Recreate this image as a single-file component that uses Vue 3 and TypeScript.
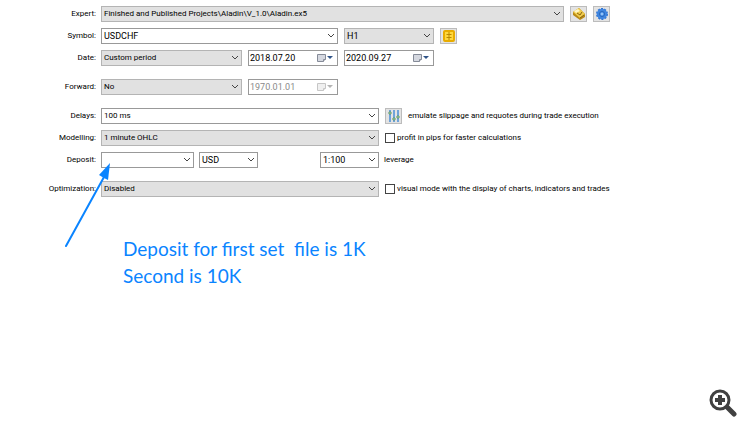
<script setup lang="ts">
import { ref } from 'vue'

const expert = ref('Finished and Published Projects\\Aladin\\V_1.0\\Aladin.ex5')
const symbol = ref('USDCHF')
const timeframe = ref('H1')
const period = ref('Custom period')
const dateFrom = ref('2018.07.20')
const dateTo = ref('2020.09.27')
const forward = ref('No')
const forwardDate = ref('1970.01.01')
const delay = ref('100 ms')
const modelling = ref('1 minute OHLC')
const deposit = ref('')
const currency = ref('USD')
const leverage = ref('1:100')
const optimization = ref('Disabled')
const profitInPips = ref(false)
const visualMode = ref(false)
</script>

<template>
  <main class="page">
    <form class="settings" @submit.prevent>
      <label class="name" for="expert">Expert:</label>
      <div class="wide expert-row">
        <span class="combo grey grow">
          <select id="expert" v-model="expert"><option>{{ expert }}</option></select>
          <svg class="chevron" viewBox="0 0 8 6"><path d="M1 1l3 3 3-3" /></svg>
        </span>
        <button type="button" class="tool" aria-label="Open expert">
          <svg viewBox="0 0 14 14">
            <path d="M1 5l6-4 6 6v3l-5 3-7-5z" fill="#b98a16" />
            <path d="M1 5l6-4 6 6-5 4z" fill="#f0cc4c" />
            <path d="M2 4l4-2 2 2-4 2z" fill="#fff6c4" />
            <path d="M5 6l3 2 2-3M8 11l4-3" fill="none" stroke="#8a6510" />
          </svg>
        </button>
        <button type="button" class="tool" aria-label="Expert settings">
          <svg viewBox="0 0 14 14">
            <circle cx="7" cy="7" r="5" fill="#3f86e0" stroke="#2f74d4" stroke-width="2" stroke-dasharray="2 1.14" />
            <circle cx="7" cy="7" r="5" fill="#3f86e0" />
            <circle cx="7" cy="7" r="2.500" fill="#5c9ff0" stroke="#2464ba" />
            <circle cx="7" cy="7" r="1" fill="#a8d0fa" />
          </svg>
        </button>
      </div>

      <label class="name" for="symbol">Symbol:</label>
      <div class="wide columns">
        <span class="combo entry double">
          <select id="symbol" v-model="symbol"><option>USDCHF</option></select>
          <svg class="chevron" viewBox="0 0 8 6"><path d="M1 1l3 3 3-3" /></svg>
        </span>
        <span class="combo entry grey">
          <select v-model="timeframe" aria-label="Timeframe"><option>H1</option></select>
          <svg class="chevron" viewBox="0 0 8 6"><path d="M1 1l3 3 3-3" /></svg>
        </span>
        <button type="button" class="tool" aria-label="Symbol specification">
          <svg viewBox="0 0 14 14">
            <rect x="2" y="2" width="10" height="10" rx="1" fill="#ffd83d" stroke="#e8ac00" stroke-width="2" />
            <path d="M7 3v8M4.500 5.500h5M4.500 8.500h5" fill="none" stroke="#b98800" />
          </svg>
        </button>
      </div>

      <label class="name" for="period">Date:</label>
      <div class="wide columns">
        <span class="combo grey">
          <select id="period" v-model="period"><option>Custom period</option></select>
          <svg class="chevron" viewBox="0 0 8 6"><path d="M1 1l3 3 3-3" /></svg>
        </span>
        <span class="date">
          <input v-model="dateFrom" type="text" aria-label="Start date" />
          <button type="button" aria-label="Choose start date">
            <svg viewBox="0 0 18 10"><path d="M1.500 1.500h8v5l-2 2h-6z" fill="#d5d8e0" stroke="#858b98" /><path d="M7.500 8.500v-2h2" fill="#fff" stroke="#858b98" /><path d="M11 3h6l-3 3z" fill="#315488" /></svg>
          </button>
        </span>
        <span class="date">
          <input v-model="dateTo" type="text" aria-label="End date" />
          <button type="button" aria-label="Choose end date">
            <svg viewBox="0 0 18 10"><path d="M1.500 1.500h8v5l-2 2h-6z" fill="#d5d8e0" stroke="#858b98" /><path d="M7.500 8.500v-2h2" fill="#fff" stroke="#858b98" /><path d="M11 3h6l-3 3z" fill="#315488" /></svg>
          </button>
        </span>
      </div>

      <label class="name section" for="forward">Forward:</label>
      <div class="wide columns section">
        <span class="combo grey">
          <select id="forward" v-model="forward"><option>No</option></select>
          <svg class="chevron" viewBox="0 0 8 6"><path d="M1 1l3 3 3-3" /></svg>
        </span>
        <span class="date off">
          <input v-model="forwardDate" type="text" aria-label="Forward date" disabled />
          <button type="button" aria-label="Choose forward date" disabled>
            <svg viewBox="0 0 18 10"><path d="M1.500 1.500h8v5l-2 2h-6z" fill="#f0f0f0" stroke="#c6c6c6" /><path d="M7.500 8.500v-2h2" fill="#fff" stroke="#c6c6c6" /><path d="M11 3h6l-3 3z" fill="#b4b4b4" /></svg>
          </button>
        </span>
      </div>

      <label class="name section" for="delay">Delays:</label>
      <span class="combo section">
        <select id="delay" v-model="delay"><option>100 ms</option></select>
        <svg class="chevron" viewBox="0 0 8 6"><path d="M1 1l3 3 3-3" /></svg>
      </span>
      <div class="aside section">
        <button type="button" class="tool" aria-label="Delay settings">
          <svg viewBox="0 0 14 14">
            <path d="M3 1v12M7 1v12M11 1v12" stroke="#4a8fd8" stroke-width="1.500" />
            <circle cx="3" cy="4" r="1.200" fill="#e4f58a" stroke="#4f8f79" />
            <circle cx="7" cy="10" r="1.200" fill="#e4f58a" stroke="#4f8f79" />
            <circle cx="11" cy="8" r="1.200" fill="#e4f58a" stroke="#4f8f79" />
          </svg>
        </button>
        <span class="note">emulate slippage and requotes during trade execution</span>
      </div>

      <label class="name" for="modelling">Modelling:</label>
      <span class="combo grey">
        <select id="modelling" v-model="modelling"><option>1 minute OHLC</option></select>
        <svg class="chevron" viewBox="0 0 8 6"><path d="M1 1l3 3 3-3" /></svg>
      </span>
      <label class="aside check"><input v-model="profitInPips" type="checkbox" />profit in pips for faster calculations</label>

      <label class="name" for="deposit">Deposit:</label>
      <div class="money">
        <span class="combo entry">
          <select id="deposit" v-model="deposit"><option value=""></option><option>1000</option><option>10000</option></select>
          <svg class="chevron" viewBox="0 0 8 6"><path d="M1 1l3 3 3-3" /></svg>
          <svg class="arrow" viewBox="0 0 48 86" aria-hidden="true">
            <path d="M3 85L41 16" stroke="#0a84ff" stroke-width="2" stroke-linecap="round" />
            <path d="M47 2l-2 17-4-2-5-3z" fill="#0a84ff" />
          </svg>
        </span>
        <span class="combo entry">
          <select v-model="currency" aria-label="Currency"><option>USD</option></select>
          <svg class="chevron" viewBox="0 0 8 6"><path d="M1 1l3 3 3-3" /></svg>
        </span>
        <span class="combo entry last">
          <select id="leverage" v-model="leverage"><option>1:100</option></select>
          <svg class="chevron" viewBox="0 0 8 6"><path d="M1 1l3 3 3-3" /></svg>
        </span>
      </div>
      <label class="aside" for="leverage">leverage</label>

      <label class="name section" for="optimization">Optimization:</label>
      <span class="combo grey section">
        <select id="optimization" v-model="optimization"><option>Disabled</option></select>
        <svg class="chevron" viewBox="0 0 8 6"><path d="M1 1l3 3 3-3" /></svg>
      </span>
      <label class="aside check section"><input v-model="visualMode" type="checkbox" />visual mode with the display of charts, indicators and trades</label>
    </form>

    <p class="annotation">Deposit for first set&nbsp; file is 1K<br />Second is 10K</p>

    <button type="button" class="magnify" aria-label="Zoom in">
      <svg viewBox="0 0 28 28">
        <path d="M18 18l7 7" stroke="#414141" stroke-width="5" stroke-linecap="round" />
        <circle cx="11" cy="11" r="9" fill="#fff" stroke="#414141" stroke-width="3" />
        <path d="M11 6v10M6 11h10" stroke="#414141" stroke-width="4" />
      </svg>
    </button>
  </main>
</template>

<style>
body {
  margin: 0;
  background: #fff;
}
</style>

<style scoped>
.page {
  position: relative;
  min-height: 100vh;
  box-sizing: border-box;
  padding-top: 6px;
  font-family: Roboto, "Liberation Sans", sans-serif;
  font-size: 8px;
  line-height: 16px;
  color: #000;
}
.settings {
  display: grid;
  grid-template-columns: 96px minmax(0, 278fr) minmax(0, 226fr);
  column-gap: 5px;
  row-gap: 6px;
  padding-right: 140px;
}
.name {
  text-align: right;
  white-space: nowrap;
}
.section {
  margin-top: 7px;
}
.wide {
  grid-column: 2 / -1;
}
.expert-row {
  display: flex;
  gap: 6px;
}
.grow {
  flex: 1;
}
.columns {
  display: grid;
  grid-template-columns: minmax(0, 141fr) minmax(0, 90fr) minmax(0, 90fr) minmax(0, 170fr);
  gap: 6px;
}
.double {
  grid-column: span 2;
}
.combo {
  position: relative;
  display: grid;
  grid-template-columns: minmax(0, 1fr) 12px;
  align-items: center;
  box-sizing: border-box;
  height: 16px;
  border: 1px solid #999;
  background: #fff;
}
.grey {
  border-color: #b4b4b4;
  background: #e1e1e1;
}
.entry {
  font-size: 9px;
}
.combo select {
  grid-column: 1 / -1;
  grid-row: 1;
  appearance: none;
  width: 100%;
  height: 14px;
  margin: 0;
  padding: 0 14px 0 2px;
  border: 0;
  border-radius: 0;
  background: transparent;
  font: inherit;
  line-height: 14px;
  color: inherit;
}
.chevron {
  grid-column: 2;
  grid-row: 1;
  justify-self: center;
  width: 8px;
  height: 6px;
  pointer-events: none;
  fill: none;
  stroke: #444;
}
.tool {
  display: grid;
  place-items: center;
  box-sizing: border-box;
  width: 17px;
  height: 16px;
  padding: 0;
  border: 1px solid #bcbcbc;
  background: #e3e3e3;
}
.tool svg {
  width: 14px;
  height: 14px;
}
.date {
  display: flex;
  align-items: center;
  box-sizing: border-box;
  height: 16px;
  border: 1px solid #999;
  font-size: 9px;
}
.date input {
  flex: 1;
  min-width: 0;
  height: 14px;
  box-sizing: border-box;
  margin: 0;
  padding: 0 0 0 1px;
  border: 0;
  background: transparent;
  font: inherit;
  color: inherit;
}
.date button {
  display: grid;
  padding: 0 3px 0 0;
  border: 0;
  background: transparent;
}
.date svg {
  width: 18px;
  height: 10px;
}
.off {
  color: #8a8a8a;
}
.aside {
  display: flex;
  align-items: center;
  height: 16px;
  white-space: nowrap;
}
.aside .tool {
  margin-left: 1px;
}
.note {
  margin-left: 6px;
}
.check {
  gap: 2px;
}
.check input {
  flex: none;
  appearance: none;
  box-sizing: border-box;
  width: 10px;
  height: 10px;
  margin: 0 0 0 1px;
  border: 1px solid #444;
  background: #fff;
}
.check input:checked {
  background: #444;
}
.money {
  display: grid;
  grid-template-columns: minmax(0, 93fr) minmax(0, 59fr) minmax(0, 52fr) minmax(0, 59fr);
  column-gap: 5px;
}
.last {
  grid-column: 4;
}
.arrow {
  position: absolute;
  top: 8px;
  left: -39px;
  z-index: 1;
  width: 48px;
  height: 86px;
  pointer-events: none;
}
.annotation {
  margin: 38px 0 0 123px;
  font-family: Lato, sans-serif;
  font-size: 19px;
  line-height: 27px;
  color: #0a84ff;
}
.magnify {
  position: absolute;
  right: 13px;
  bottom: 12px;
  display: grid;
  padding: 0;
  border: 0;
  background: transparent;
}
.magnify svg {
  width: 28px;
  height: 28px;
}
</style>
